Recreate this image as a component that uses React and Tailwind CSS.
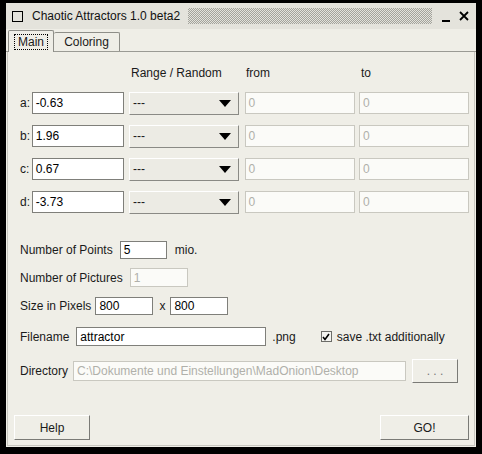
import React from 'react';

const font = "font-['Liberation_Sans',Arial,sans-serif]";

function TextBox({ value, w, disabled = false, h = 'h-[22px]' }) {
  return (
    <div
      className={`${w} ${h} shrink-0 flex items-center px-[3px] text-[12px] border ${
        disabled
          ? 'bg-[#fbfbf8] border-[#c9c8c0] text-[#b0b0aa]'
          : 'bg-white border-[#7f7f7a] text-black'
      }`}
    >
      {value}
    </div>
  );
}

function Select() {
  return (
    <div className="w-[110px] h-[23px] shrink-0 flex items-center justify-between pl-[3px] pr-[7px] bg-[#ecebe4] border border-t-white border-l-white border-b-[#8a8a85] border-r-[#8a8a85] text-[12px]">
      <span>---</span>
      <svg width="12" height="7" viewBox="0 0 12 7">
        <polygon points="0,0 12,0 6,7" fill="#000" />
      </svg>
    </div>
  );
}

function Button({ label, w, h = 'h-[24px]', muted = false }) {
  return (
    <div
      className={`${w} ${h} shrink-0 flex items-center justify-center bg-[#efeee7] border border-t-white border-l-white border-b-[#7a7a76] border-r-[#7a7a76] text-[12px] ${
        muted ? 'text-[#777]' : ''
      }`}
    >
      {label}
    </div>
  );
}

const params = [
  ['a:', '-0.63'],
  ['b:', '1.96'],
  ['c:', '0.67'],
  ['d:', '-3.73'],
];

export default function App() {
  return (
    <div className={`w-[482px] h-[454px] bg-black pt-[3px] pl-[6px] ${font} text-[12px] text-[#1a1a1a]`}>
      <div className="w-[470px] h-[444px] bg-[#efeee7] flex flex-col">
        {/* title bar */}
        <div className="h-[26px] flex items-center bg-[#e4e3dc] pl-[6px] pr-[4px]">
          <div className="w-[11px] h-[11px] border-[1.5px] border-black mr-[9px]" />
          <span className="text-[12px] text-[#111] whitespace-nowrap">Chaotic Attractors 1.0 beta2</span>
          <div className="flex-1 h-[16px] ml-[8px] mr-[6px] bg-[repeating-conic-gradient(#a3a39c_0_25%,transparent_0_50%)] bg-[length:2px_2px]" />
          <div className="w-[15px] h-[15px] flex items-end justify-center pb-[2px]">
            <div className="w-[8px] h-[2px] bg-black" />
          </div>
          <div className="w-[17px] h-[15px] flex items-center justify-center ml-[2px]">
            <svg width="10" height="10" viewBox="0 0 10 10">
              <path d="M1 1 L9 9 M9 1 L1 9" stroke="#000" strokeWidth="1.8" />
            </svg>
          </div>
        </div>

        {/* tabs */}
        <div className="h-[23px] flex items-end pl-[2px] border-b border-[#9a9a94] bg-[#efeee7]">
          <div className="w-[46px] h-[22px] flex items-center justify-center border border-b-0 border-[#8e8e88] rounded-t-[2px] bg-[#efeee7] -mb-px">
            <span className="border border-dotted border-black px-[3px] leading-[14px] text-[12px]">Main</span>
          </div>
          <div className="w-[66px] h-[19px] flex items-center justify-center border border-b-0 border-l-0 border-[#8e8e88] rounded-t-[2px] text-[12px]">
            Coloring
          </div>
        </div>

        {/* panel */}
        <div className="flex-1 flex flex-col border-l border-r border-b border-[#c8c7c0] mx-[1px] mb-[1px] pl-[12px] pr-[5px]">
          <div className="flex h-[40px] items-end pb-[10px] pl-[111px] text-[12px]">
            <span className="w-[115px]">Range / Random</span>
            <span className="w-[115px]">from</span>
            <span>to</span>
          </div>
          <div className="flex flex-col gap-[11px]">
            {params.map(([label, val]) => (
              <div key={label} className="flex items-center h-[22px]">
                <span className="w-[13px] text-[12px]">{label}</span>
                <TextBox value={val} w="w-[92px]" />
                <div className="w-[6px]" />
                <Select />
                <div className="w-[6px]" />
                <TextBox value="0" w="w-[110px]" disabled />
                <div className="w-[5px]" />
                <TextBox value="0" w="w-[110px]" disabled />
              </div>
            ))}
          </div>

          <div className="flex items-center h-[18px] mt-[28px]">
            <span className="mr-[7px]">Number of Points</span>
            <TextBox value="5" w="w-[47px]" h="h-[18px]" />
            <span className="ml-[8px]">mio.</span>
          </div>
          <div className="flex items-center h-[19px] mt-[9px]">
            <span className="mr-[7px]">Number of Pictures</span>
            <TextBox value="1" w="w-[58px]" h="h-[19px]" disabled />
          </div>
          <div className="flex items-center h-[18px] mt-[10px]">
            <span className="mr-[4px]">Size in Pixels</span>
            <TextBox value="800" w="w-[58px]" h="h-[18px]" />
            <span className="ml-[6px] mr-[5px]">x</span>
            <TextBox value="800" w="w-[58px]" h="h-[18px]" />
          </div>
          <div className="flex items-center h-[19px] mt-[12px]">
            <span className="mr-[7px]">Filename</span>
            <TextBox value="attractor" w="w-[190px]" h="h-[19px]" />
            <span className="ml-[6px]">.png</span>
            <div className="w-[11px] h-[11px] ml-[25px] border border-[#6c6c68] bg-[#f4f4f0] flex items-center justify-center">
              <svg width="8" height="8" viewBox="0 0 8 8">
                <path d="M1 4 L3 6.5 L7 1" stroke="#000" strokeWidth="1.6" fill="none" />
              </svg>
            </div>
            <span className="ml-[5px]">save .txt additionally</span>
          </div>
          <div className="flex items-center h-[24px] mt-[13px]">
            <span className="mr-[5px]">Directory</span>
            <TextBox value="C:\Dokumente und Einstellungen\MadOnion\Desktop" w="w-[333px]" h="h-[20px]" disabled />
            <div className="w-[6px]" />
            <Button label=". . ." w="w-[46px]" muted />
          </div>

          <div className="flex-1" />
          <div className="flex justify-between items-center -ml-[6px] mb-[5px]">
            <Button label="Help" w="w-[76px]" h="h-[25px]" />
            <Button label="GO!" w="w-[89px]" h="h-[25px]" />
          </div>
        </div>
      </div>
    </div>
  );
}
